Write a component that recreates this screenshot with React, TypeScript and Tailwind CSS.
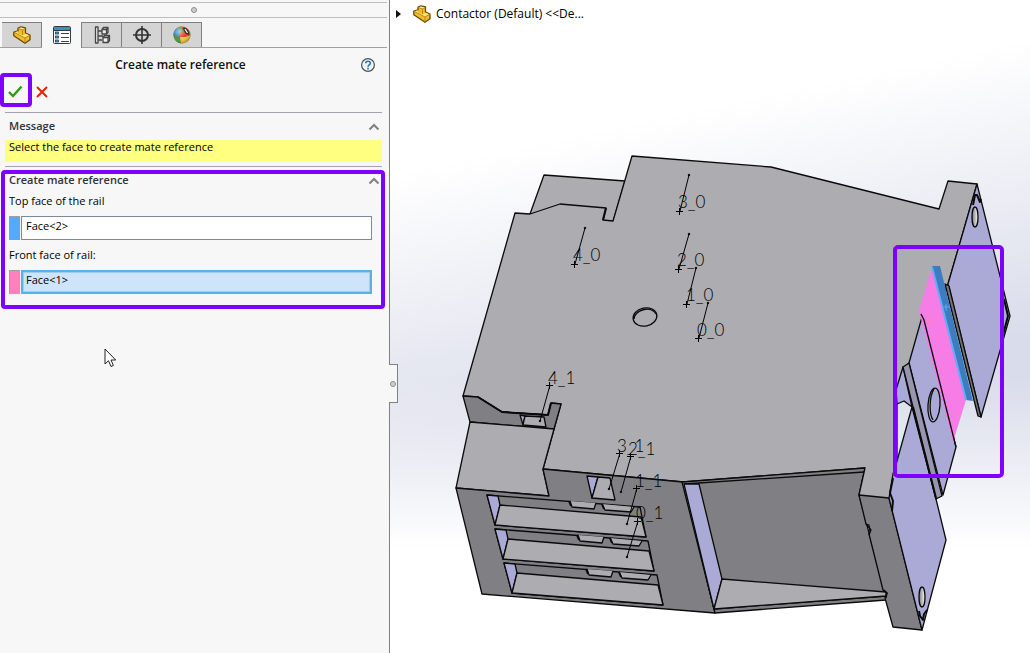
import React, { useState } from "react";

const LIGHT = "#adacb1";
const DARK = "#807f83";
const LAVENDER = "#abaad6";

const labels = [
  { text: "3_0", x: 678, y: 208, from: [689, 175], to: [680, 211] },
  { text: "2_0", x: 677, y: 266, from: [689, 234], to: [679, 269] },
  { text: "1_0", x: 686, y: 301, from: [696, 268], to: [687, 304] },
  { text: "0_0", x: 697, y: 336, from: [708, 303], to: [699, 338] },
  { text: "4_0", x: 573, y: 261, from: [585, 228], to: [575, 264] },
  { text: "4_1", x: 548, y: 384, from: [540, 421], to: [550, 385] },
  { text: "3_1", x: 617, y: 452, from: [609, 489], to: [620, 453] },
  { text: "2_1", x: 628, y: 455, from: [621, 492], to: [631, 456] },
  { text: "1_1", x: 635, y: 487, from: [627, 524], to: [637, 488] },
  { text: "0_1", x: 636, y: 519, from: [627, 557], to: [638, 521] },
];

const PartIcon: React.FC<{ className?: string }> = ({ className }) => (
  <svg viewBox="0 0 18 18" className={className} aria-hidden="true">
    <path
      d="M.8 6L5 4.800V2L8 .8l4.500 1.200v5L17 9v4.800L12 17.300.8 9.800z"
      fill="#f0bd2c"
      stroke="#6b4a08"
      strokeWidth="1.300"
      strokeLinejoin="round"
    />
    <path d="M5.500 2.300L8 1.400l4 1L9.500 3.800z" fill="#fff0a0" />
    <path d="M1.500 6.300L5 5.300v2l4.500 2 3-1.500L16.300 9.300 12 12z" fill="#ffe26a" />
    <path d="M9.500 4v5M5.200 2.400l4.300 1.500 2.800-1.600M12 12v5M1.300 6.400L12 12l4.700-2.800" fill="none" stroke="#a87c14" strokeWidth=".8" />
  </svg>
);

const PropertyIcon = () => (
  <svg viewBox="0 0 18 18" className="size-[18px]" aria-hidden="true">
    <rect x=".5" y=".5" width="17" height="17" rx="1" fill="#fff" stroke="#2f3b46" />
    <path d="M1 1h16v3H1z" fill="#3d8fb8" />
    <path d="M1 4.500h16" stroke="#2f3b46" />
    <g fill="#4da3cc" stroke="#2f3b46" strokeWidth=".8">
      <rect x="2.500" y="6" width="3" height="2" />
      <rect x="2.500" y="10" width="3" height="2" />
      <rect x="2.500" y="14" width="3" height="2" />
    </g>
    <path d="M8 7.500h8M8 11.500h8M8 15.500h8" stroke="#444" />
  </svg>
);

const ConfigIcon = () => (
  <svg viewBox="0 0 18 18" className="size-[18px]" aria-hidden="true">
    <g fill="#eee" stroke="#444" strokeWidth="1.300" strokeLinejoin="round">
      <path d="M2.500 1h2.500v16H2.500zM5 5h4M5 14h4" />
      <path d="M9 3.500l1.500-2H15v5L13.500 8H9zM9 3.500h4.500V8M13.500 3.500l1.500-2" />
      <path d="M10 11.500l1.500-2H16.500v5L15 16.500h-5zM10 11.500h5v5M15 11.500l1.500-2M5 10h5" />
    </g>
  </svg>
);

const TargetIcon = () => (
  <svg viewBox="0 0 18 18" className="size-[18px]" aria-hidden="true">
    <circle cx="9" cy="9" r="6" fill="none" stroke="#333" strokeWidth="2" />
    <path d="M9 0v18M0 9h18" stroke="#333" strokeWidth="1.600" />
  </svg>
);

const AppearanceIcon = () => (
  <svg viewBox="0 0 18 18" className="size-[18px]" aria-hidden="true">
    <defs>
      <radialGradient id="shine" cx=".35" cy=".3" r=".75">
        <stop offset="0" stopColor="#fff" stopOpacity=".6" />
        <stop offset=".5" stopColor="#fff" stopOpacity="0" />
        <stop offset="1" stopColor="#000" stopOpacity=".35" />
      </radialGradient>
    </defs>
    <circle cx="9" cy="9" r="8.500" fill="#e7412b" />
    <path d="M8 .5A8.500 8.500 0 0 0 4 2L6 8l4-3z" fill="#3e9a42" />
    <path d="M4 2A8.500 8.500 0 0 0 .5 10l6.500 1V6z" fill="#2f7fd0" />
    <path d="M.5 10A8.500 8.500 0 0 0 8 17.500L7 11z" fill="#3e9a42" />
    <path d="M7 11l1 6.500A8.500 8.500 0 0 0 17.500 9L13 11z" fill="#f6cb39" />
    <path d="M9.500 2c4-1 7 2 6.500 7-3 0-5-3-6.500-7z" fill="#2c2020" />
    <path d="M12 3l2.500 4" stroke="#fff" strokeWidth="1.200" />
    <circle cx="9" cy="9" r="8.500" fill="url(#shine)" />
  </svg>
);

const tabs = [
  { name: "FeatureManager", icon: <PartIcon className="size-[18px]" /> },
  { name: "PropertyManager", icon: <PropertyIcon /> },
  { name: "ConfigurationManager", icon: <ConfigIcon /> },
  { name: "DimXpertManager", icon: <TargetIcon /> },
  { name: "DisplayManager", icon: <AppearanceIcon /> },
];

const SectionHeader: React.FC<{ title: string; onToggle: () => void }> = ({ title, onToggle }) => (
  <div className="flex h-[27px] items-center justify-between pl-1 pr-[2px]">
    <h2 className="text-[11px] font-semibold text-[#33333b]">{title}</h2>
    <button type="button" aria-label={"Toggle " + title} onClick={onToggle}>
      <svg viewBox="0 0 12 8" className="h-2 w-3">
        <path d="M1.500 6.500L6 2l4.500 4.500" fill="none" stroke="#808080" strokeWidth="2" />
      </svg>
    </button>
  </div>
);

// one open bay of the terminal block, repeated three times
const Shelf: React.FC<{ dx: number; dy: number }> = ({ dx, dy }) => (
  <g transform={`translate(${dx} ${dy})`}>
    <path d="M487 495L640 507 646 537 495 525z" fill={DARK} />
    <path d="M487 495L498 496 500 505 495 525z" fill={LAVENDER} />
    <path d="M500 505L641 517 646 537 495 525z" fill={LIGHT} />
    <path d="M570 501L572 507 594 509 596 503M602 504L605 510 631 512 634 507" fill={LIGHT} />
    <path d="M569 501l2 5M602 504l2 5" strokeWidth="2" />
  </g>
);

const Model = () => (
  <svg
    viewBox="390 0 640 653"
    preserveAspectRatio="xMinYMin meet"
    className="h-full w-full"
    role="img"
    aria-label="Contactor"
  >
    <defs>
      <linearGradient id="hole">
        <stop offset="0" stopColor="#777" />
        <stop offset="1" stopColor="#fff" />
      </linearGradient>
    </defs>
    <g stroke="#0a0a0a" strokeWidth="1.300" strokeLinejoin="round">
      <path d="M530 214L544 175 625 181 613 222 600 222z" fill={LIGHT} />
      {/* top face */}
      <path
        d="M515 213L530 214 560 204 606 208 603 220 613 221 632 156 771 167 939 209 948 181 977 184 948 284 924 340 897 390 897 465 889 498 859 495 865 468 683 482 543 469 561 404 551 403 548 415 502 412 478 397 463 396z"
        fill={LIGHT}
      />
      <path d="M606 208L603 220" strokeWidth="2" />
      {/* left step */}
      <path d="M463 396L478 397 502 412 548 415 551 403 561 404 554 429 470 422z" fill={DARK} />
      <path d="M478 397L502 412 548 415 551 403" fill="none" strokeWidth="2" />
      <path d="M520 415L525 416 523 425z" fill={LAVENDER} />
      <path d="M525 416L544 417 546 427 523 425z" fill={LIGHT} />
      <path d="M470 422L554 429 543 469 549 496 456 488z" fill={LIGHT} />
      {/* front */}
      <path d="M456 488L549 496 543 469 683 482 715 613 482 594z" fill={DARK} />
      <path d="M587 476L598 477 592 498z" fill={LAVENDER} />
      <path d="M598 477L610 478 615 500 592 498z" fill={LIGHT} />
      <Shelf dx={0} dy={0} />
      <Shelf dx={8} dy={34} />
      <Shelf dx={17} dy={68} />
      {/* right bay */}
      <path d="M682 482L865 468 859 495 886 597 886 600 715 613z" fill={DARK} />
      <path d="M684 484L864 472M714 609L886 596" />
      <path d="M684 484L699 484 722 579 714 609z" fill={LAVENDER} />
      <path d="M722 579L886 592 886 596 714 609z" fill={LIGHT} />
      <path d="M865 468L859 495 889 498 897 465z" fill={LIGHT} stroke="none" />
      <path d="M865 468L859 495" />
      <path d="M859 495L889 498 922 630 893 627 885 598 887 593 883 590 869 534 871 530 866 524z" fill={DARK} />
      <path d="M866 524l3 1 1 7-1 3M884 590l3 3-1 5" fill="none" />
      {/* mounting plates */}
      <path d="M912 407L897 461 893 474 889 498 922 630 946 540 936 499z" fill={LAVENDER} />
      <path d="M893 478l-3 15 3 8-1 10M919 611l1 5 3 4 1-6 3-4" fill="none" strokeWidth="2" />
      <path d="M903 367L896 390 897 404 904 401 912 407z" fill={LAVENDER} />
      <path d="M922 317L909 363 943 495 956 447 924 320z" fill={LAVENDER} />
      <path d="M903 367L909 363 942 496 936 499z" fill="#9796ae" />
      <path d="M913 407L936 498" strokeWidth="2" />
      <ellipse cx="934" cy="405" rx="6" ry="17" transform="rotate(4 934 405)" fill={LAVENDER} />
      <path d="M934 389c-5 8-5 25 -1 31" fill="none" />
      <path d="M977 184L948 284 981 417 1010 316z" fill={LAVENDER} />
      <path d="M1004 299L1008 316 1003 335" fill="none" strokeWidth="2" />
      <path d="M945 284L949 286 981 417 978 416z" fill="#777" />
      <path d="M973 205l2-10 2 0 3 7 1-3" fill="none" strokeWidth="2" />
      <ellipse cx="975" cy="217" rx="3" ry="10" fill="url(#hole)" />
      <ellipse cx="922" cy="597" rx="3" ry="10" fill="url(#hole)" />
      <ellipse cx="645" cy="317" rx="12" ry="9" transform="rotate(-12 645 317)" fill={LIGHT} />
      <path d="M634 319c0-9 17-14 22-5" fill="none" />
    </g>
    {/* selected faces */}
    <path d="M932 267L919 311 953 442 966 400z" fill="#f67ce6" />
    <path d="M932 266L940 266 973 401 966 400z" fill="#3c7cc0" />
    <path d="M932 267L966 400" stroke="#62aef5" strokeWidth="2" />
    <path d="M921 314L924 320 956 447" fill="none" stroke="#0a0a0a" strokeWidth="1.300" />
    <path d="M943 307h7M946 304v7" stroke="#55a8ff" />
    <path d="M927 321h7M930 318v7" stroke="#ff80c0" />

    <g stroke="#000" fontFamily="Lato, sans-serif" fontSize="17" fontWeight="300">
      {labels.map((l) => (
        <g key={l.text}>
          <path d={`M${l.from[0]} ${l.from[1]}L${l.to[0]} ${l.to[1]}`} />
          <path d={`M${l.to[0] - 4} ${l.to[1] + 0.5}h7M${l.to[0] - 0.5} ${l.to[1] - 3}v7`} />
          <circle cx={l.from[0]} cy={l.from[1]} r=".8" />
          <text x={l.x} y={l.y} stroke="none" fill="#000">
            {l.text}
          </text>
        </g>
      ))}
    </g>
    <rect x="895" y="247" width="107" height="229" rx="3" fill="none" stroke="#7f00ff" strokeWidth="4" />
  </svg>
);

const App: React.FC = () => {
  const [activeTab, setActiveTab] = useState("PropertyManager");
  const [showMessage, setShowMessage] = useState(true);
  const [showReference, setShowReference] = useState(true);
  const [topFace, setTopFace] = useState("Face<2>");
  const [frontFace, setFrontFace] = useState("Face<1>");

  return (
    <div className="flex h-screen overflow-hidden bg-white font-['Open_Sans','Noto_Sans',sans-serif] text-[11px] text-black">
      <aside className="relative z-10 w-[390px] shrink-0 border-r border-[#808080] bg-[#f7f7f7]">
        <div className="mr-[2px] mt-[2px] flex h-4 items-center justify-center border-y border-[#bfbfbf]">
          <span className="size-[6px] rounded-full border border-[#8c8c8c] bg-[#d0d0d0]" />
        </div>

        <div className="mr-[2px] mt-1 flex h-[26px] border-b border-[#a0a0a0] pl-[2px]">
          {tabs.map((tab) => (
            <button
              key={tab.name}
              type="button"
              aria-label={tab.name}
              onClick={() => setActiveTab(tab.name)}
              className={
                tab.name === activeTab
                  ? "-mb-px flex w-10 items-center justify-center border-r border-[#808080] bg-[#f7f7f7]"
                  : "flex w-10 items-center justify-center border-r border-t border-[#808080] bg-[#d4d4d4]"
              }
            >
              {tab.icon}
            </button>
          ))}
        </div>

        <div className="relative flex h-[34px] items-center justify-center pr-7">
          <h1 className="text-[12px] font-semibold text-[#111]">Create mate reference</h1>
          <button type="button" aria-label="Help" className="absolute right-[14px]">
            <svg viewBox="0 0 14 14" className="size-[14px]">
              <circle cx="7" cy="7" r="6.400" fill="#f2f2f2" stroke="#4a5560" strokeWidth="1.200" />
              <path
                d="M4.800 5.300C4.800 2.500 9.300 2.600 9.300 5.200 9.300 6.800 7 6.900 7 8.700M7 9.800v1.600"
                fill="none"
                stroke="#2a78b0"
                strokeWidth="1.600"
              />
            </svg>
          </button>
        </div>

        <div className="flex h-5 items-center gap-3 pl-2">
          <button type="button" aria-label="OK" className="relative">
            <svg viewBox="0 0 16 14" className="h-[14px] w-4">
              <path d="M1 7l4 4L13.500 1.500" fill="none" stroke="#2f9e0c" strokeWidth="2.400" />
            </svg>
            <span className="absolute -bottom-2 -left-2 -right-2 -top-3 rounded border-4 border-[#7f00ff]" />
          </button>
          <button type="button" aria-label="Cancel">
            <svg viewBox="0 0 12 12" className="size-3">
              <path d="M1 1l10 10M11 1L1 11" stroke="#e32400" strokeWidth="2" />
            </svg>
          </button>
        </div>

        <section className="ml-[5px] mr-[7px] mt-[10px] border-t border-[#a3a3ab]">
          <SectionHeader title="Message" onToggle={() => setShowMessage(!showMessage)} />
          {showMessage && (
            <p className="h-[22px] bg-[#ffff80] pl-1 leading-[14px]">
              Select the face to create mate reference
            </p>
          )}
        </section>

        <section className="relative ml-[5px] mr-[7px] mt-1 border-t border-[#a3a3ab] pb-4">
          <SectionHeader title="Create mate reference" onToggle={() => setShowReference(!showReference)} />
          {showReference && (
            <div className="pl-1 pr-[10px]">
              <label htmlFor="top-face" className="block leading-[14px]">
                Top face of the rail
              </label>
              <div className="mt-2 flex h-6 gap-px">
                <span className="w-[11px] border-l border-t border-[#a0a0a0] bg-[#57a8ff]" />
                <input
                  id="top-face"
                  type="text"
                  value={topFace}
                  onChange={(e) => setTopFace(e.target.value)}
                  className="min-w-0 flex-1 border border-[#7f879c] bg-white pb-1 pl-1 outline-none"
                />
              </div>
              <label htmlFor="front-face" className="mt-2 block leading-[14px]">
                Front face of rail:
              </label>
              <div className="mt-2 flex h-6 gap-px">
                <span className="w-[11px] border-l border-t border-[#a0a0a0] bg-[#ff80bf]" />
                <input
                  id="front-face"
                  type="text"
                  value={frontFace}
                  onChange={(e) => setFrontFace(e.target.value)}
                  className="min-w-0 flex-1 border-2 border-[#5ab2e4] bg-[#cee4f8] pb-1 pl-[3px] shadow-[inset_0_0_0_1px_#a0cdf0] outline-none"
                />
              </div>
            </div>
          )}
          <span className="pointer-events-none absolute -left-1 -right-[3px] bottom-px top-[3px] rounded border-4 border-[#7f00ff]" />
        </section>

        <svg viewBox="0 0 13 20" className="absolute left-[104px] top-[348px] h-5 w-[13px]" aria-hidden="true">
          <path d="M1 1v15l3.500-3.300L7 18.500l2.400-1L7 12h4.700z" fill="#fff" stroke="#222" />
        </svg>

        <button
          type="button"
          aria-label="Collapse panel"
          className="absolute -right-[9px] top-[364px] flex h-[39px] w-[9px] items-center justify-center border-y border-r border-[#808080] bg-[#f7f7f7]"
        >
          <span className="size-[6px] shrink-0 rounded-full border border-[#8c8c8c] bg-[#d0d0d0]" />
        </button>
      </aside>

      <main className="relative min-w-0 flex-1 bg-[linear-gradient(to_bottom,transparent_58%,white_84%),linear-gradient(168deg,white_22%,#d9dcea_60%)]">
        <Model />
        <div className="absolute left-[6px] top-1 flex h-5 items-center">
          <svg viewBox="0 0 5 8" className="h-2 w-[5px]" aria-hidden="true">
            <path d="M0 0l5 4-5 4z" fill="#111" />
          </svg>
          <PartIcon className="ml-3 size-[18px]" />
          <span className="ml-[5px] whitespace-nowrap text-[12px]">Contactor (Default) &lt;&lt;De...</span>
        </div>
      </main>
    </div>
  );
};

export default App;
